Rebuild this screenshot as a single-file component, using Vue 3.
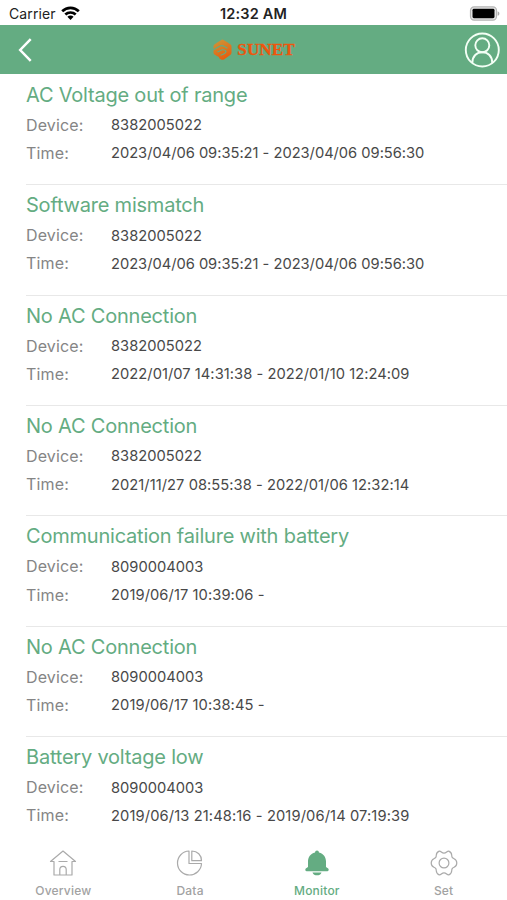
<script setup>
const alarms = [
  { title: 'AC Voltage out of range', device: '8382005022', time: '2023/04/06 09:35:21 - 2023/04/06 09:56:30', tracking: -0.02 },
  { title: 'Software mismatch', device: '8382005022', time: '2023/04/06 09:35:21 - 2023/04/06 09:56:30', tracking: -0.02 },
  { title: 'No AC Connection', device: '8382005022', time: '2022/01/07 14:31:38 - 2022/01/10 12:24:09', tracking: 0.04 },
  { title: 'No AC Connection', device: '8382005022', time: '2021/11/27 08:55:38 - 2022/01/06 12:32:14', tracking: 0.05 },
  { title: 'Communication failure with battery', device: '8090004003', time: '2019/06/17 10:39:06 -', tracking: 0.08 },
  { title: 'No AC Connection', device: '8090004003', time: '2019/06/17 10:38:45 -', tracking: 0.08 },
  { title: 'Battery voltage low', device: '8090004003', time: '2019/06/13 21:48:16 - 2019/06/14 07:19:39', tracking: 0.11 },
]
</script>

<template>
  <div class="screen">
    <div class="status">
      <div class="carrier">
        <span>Carrier</span>
        <svg width="19" height="15" viewBox="0 0 19 15" fill="none" stroke="#000" stroke-width="2.7">
          <path d="M1.2 5.3C5.9.7 13.1.7 17.8 5.3" />
          <path d="M4.3 8.6C7.3 5.8 11.7 5.8 14.7 8.6" />
          <path d="M9.5 14 6.4 10.8C8.2 9.2 10.8 9.2 12.6 10.8Z" fill="#000" stroke="none" />
        </svg>
      </div>
      <span class="clock">12:32 AM</span>
      <div class="battery">
        <svg width="31" height="15" viewBox="0 0 31 15">
          <rect x="1.5" y=".9" width="26" height="13.2" rx="3.6" fill="#e8e8e8" stroke="#b4b4b4" stroke-width="1.2" />
          <rect x="3.5" y="2.8" width="22" height="9.4" rx="1.4" fill="#000" />
          <path d="M28.6 5.2C31 6 31 9 28.6 9.8Z" fill="#aaa" />
        </svg>
      </div>
    </div>
    <header class="nav">
      <svg class="back" width="14" height="24" viewBox="0 0 14 24" fill="none" stroke="#fff" stroke-width="2.5">
        <path d="M12.7 1.2 2.200 12l10.500 10.800" />
      </svg>
      <svg class="logo" width="86" height="24" viewBox="0 0 86 24">
        <defs>
          <linearGradient id="sun" x1="0" y1="0" x2=".4" y2="1">
            <stop offset="0" stop-color="#c99a3c" />
            <stop offset="1" stop-color="#e8600f" />
          </linearGradient>
        </defs>
        <path d="M10.5 1.500Q11.200 1.500 18.600 6.500 19.500 7.200 19.500 8.500V14.500Q19.500 16.300 18.200 17.100L12 21.400Q10.500 22.200 9 21.400L2.800 17.100Q1.500 16.300 1.500 14.500V8.500Q1.500 7.200 2.400 6.500 9.800 1.500 10.500 1.500Z" fill="url(#sun)" />
        <path d="M1 12 7.500 8.200Q10 7 12.500 8.500L15.500 10.200M1 16.500 7 19.800M5.500 14 10 11.800Q13.500 11.500 14 13.500 14 15.500 8.500 17.200" fill="none" stroke="#64ac82" stroke-width="1.1" />
        <text x="25.300" y="17" textLength="57.500" lengthAdjust="spacingAndGlyphs">SUNET</text>
      </svg>
      <svg class="user" width="36" height="36" viewBox="0 0 36 36" fill="none" stroke="#f3fff5" stroke-width="1.9">
        <circle cx="18.300" cy="18" r="16.500" />
        <circle cx="18.300" cy="13.300" r="7" />
        <path d="M8.300 31C8.300 24 12.800 20.300 18.300 20.300S28.300 24 28.300 31" />
      </svg>
    </header>
    <main class="list">
      <section v-for="(a, i) in alarms" :key="i" class="alarm">
        <h2>{{ a.title }}</h2>
        <div class="row"><span class="label">Device:</span><span class="value">{{ a.device }}</span></div>
        <div class="row"><span class="label">Time:</span><span class="value" :style="{ letterSpacing: a.tracking + 'px' }">{{ a.time }}</span></div>
      </section>
    </main>
    <footer class="tabs">
      <div class="tab">
        <svg width="28" height="28" viewBox="0 0 28 28" fill="none" stroke="#aaa" stroke-width="1.2" stroke-linejoin="round">
          <path d="M5 12.500H1.500L14 2l12.500 10.500H23V26H5ZM10.800 26v-5.500a3.200 3.200 0 0 1 6.400 0V26M9.500 12.500h9" />
        </svg>
        <span>Overview</span>
      </div>
      <div class="tab">
        <svg width="28" height="28" viewBox="0 0 28 28" fill="none" stroke="#aaa" stroke-width="1.2" stroke-linejoin="round">
          <path d="M13 2A12 12 0 1 0 25.500 14.500H13Z" />
          <path d="M15.800 2V11.700H25.500C25.500 6 21.500 2 15.800 2Z" />
        </svg>
        <span>Data</span>
      </div>
      <div class="tab active">
        <svg width="28" height="28" viewBox="0 0 28 28" fill="#64ac82">
          <path d="M14 1.500a2 2 0 0 1 2 1.900C20.500 4.600 23 8 23 12.500V18l2.200 1.400c1 .9.400 2.900-.9 2.900H3.700c-1.300 0-1.900-2-.9-2.900L5 18v-5.500C5 8 7.500 4.600 12 3.400A2 2 0 0 1 14 1.500Z" />
          <path d="M9.500 23.400h9C17.500 27.200 10.500 27.200 9.500 23.400Z" />
        </svg>
        <span>Monitor</span>
      </div>
      <div class="tab">
        <svg width="28" height="28" viewBox="0 0 28 28" fill="none" stroke="#aaa" stroke-width="1.200" stroke-linejoin="round">
          <path d="M9.200 2.100C11 1.700 11.600 4.200 14 4.200S17 1.700 18.800 2.100C23 3.800 21 6.500 22.200 8.300 23.500 10.300 26.800 9.400 26.800 14S23.500 17.700 22.200 19.700C21 21.500 23 24.200 18.800 25.900 17 26.300 16.400 23.800 14 23.800S11 26.300 9.200 25.900C5 24.200 7 21.500 5.800 19.700 4.500 17.700 1.200 18.600 1.200 14S4.500 10.300 5.800 8.300C7 6.500 5 3.800 9.200 2.100Z" />
          <circle cx="14" cy="14" r="4.900" />
        </svg>
        <span>Set</span>
      </div>
    </footer>
  </div>
</template>

<style>
body {
  margin: 0;
  background: #fff;
}
</style>

<style scoped>
.screen {
  width: 507px;
  height: 900px;
  display: flex;
  flex-direction: column;
  overflow: hidden;
  background: #fff;
  font-family: Inter, "Liberation Sans", sans-serif;
}
.status {
  height: 25.4px;
  flex: none;
  display: grid;
  grid-template-columns: 1fr auto 1fr;
  align-items: center;
  padding: 2px 7px 0 9px;
  box-sizing: border-box;
  font-size: 14px;
  line-height: 20px;
  color: #222;
}
.carrier {
  display: flex;
  align-items: center;
  gap: 5px;
  letter-spacing: 0.1px;
}
.clock {
  font-weight: 600;
  font-size: 14.5px;
  letter-spacing: 0.2px;
  margin-right: 2px;
}
.battery {
  display: flex;
  justify-content: flex-end;
}
.nav {
  height: 48.4px;
  flex: none;
  display: grid;
  grid-template-columns: 1fr 86px 1fr;
  align-items: center;
  padding: 0 7px 0 18px;
  background: #64ac82;
}
.logo {
  margin-left: -4px;
}
.logo text {
  font-family: "Liberation Serif", serif;
  font-weight: 700;
  font-size: 16.5px;
  fill: #ed560d;
  stroke: #ed560d;
  stroke-width: 0.3px;
}
.user {
  justify-self: end;
}
.list {
  flex: none;
  padding-left: 26px;
}
.alarm {
  height: 110.4px;
  box-sizing: border-box;
  padding-top: 8px;
  box-shadow: 0 1px 0 #e8e8e8;
}
.alarm:last-child {
  box-shadow: none;
}
h2 {
  margin: 0 0 3px;
  font-size: 20px;
  line-height: 26px;
  font-weight: 400;
  letter-spacing: -0.21px;
  color: #64ac82;
}
.row {
  display: flex;
  height: 28.2px;
  align-items: center;
}
.label {
  width: 85px;
  font-size: 16px;
  letter-spacing: 0.15px;
  color: #858585;
}
.value {
  padding-top: 0.6px;
  font-size: 14.7px;
  color: #484848;
}
.tabs {
  flex: 1;
  display: grid;
  grid-template-columns: repeat(4, 1fr);
}
.tab {
  display: flex;
  flex-direction: column;
  align-items: center;
  gap: 6px;
  padding-top: 2px;
  font-size: 12px;
  line-height: 16px;
  font-weight: 500;
  letter-spacing: 0.2px;
  color: #a2a2a2;
}
.active {
  color: #64ac82;
}
</style>
